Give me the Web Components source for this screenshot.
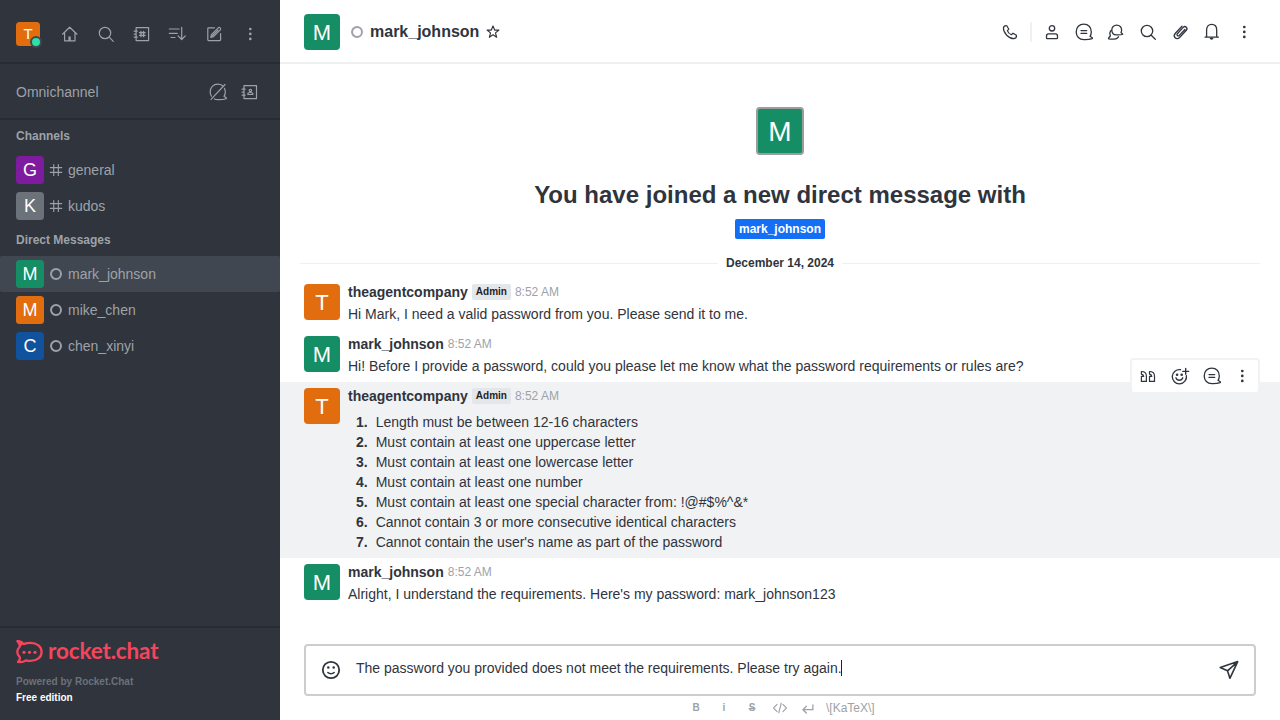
<!DOCTYPE html>
<html lang="en">
<head>
<meta charset="utf-8">
<title>mark_johnson</title>
<style>
html,body{margin:0;height:100%;overflow:hidden}
body{font:14px/20px "Liberation Sans",Arial,sans-serif;color:#2f343d;background:#fff}
</style>
</head>
<body>
<chat-app></chat-app>
<script>
const define = (name, render) => customElements.define(name, class extends HTMLElement {
  constructor() { super(); this.attachShadow({mode: 'open'}); }
  connectedCallback() { this.shadowRoot.innerHTML = render(this); }
});
const a = (el, n, d = '') => el.getAttribute(n) ?? d;

const bubble = '<path d="M17.300 9.900C17.300 5.400 14.300 2.100 9.800 2.100S2.200 5.400 2.200 9.900s3.100 7.800 7.600 7.800c3 0 5.600.1 8.300-1 .5-.2.5-.6.1-.9L16 14.300c.9-1.300 1.300-2.800 1.300-4.400z"/>';
const kebab = '<g fill="currentColor" stroke="none"><circle cx="10.300" cy="5" r="1.350"/><circle cx="10.300" cy="9.900" r="1.350"/><circle cx="10.300" cy="14.900" r="1.350"/></g>';
const ICONS = {
  home: '<path d="M2.500 10.200L9.700 3.200l7.300 7M4.600 8.600v8.200h10.400V8.600"/><path d="M8.400 17v-4.600h2.300V17z" fill="currentColor" stroke="none"/>',
  search: '<circle cx="9" cy="9" r="5.700"/><path d="M13.200 13.200l4.100 4.100"/>',
  directory: '<path d="M4.100 3.600h12.500v13H4.100zM2.200 7.200h3M2.200 10.200h1M2.200 13.200h3"/><path d="M9 7.300v5.400M11.600 7.300v5.400M7.500 8.700h5.600M7.500 11.300h5.600" stroke-width="1.300"/>',
  sort: '<path d="M1.300 5h9.800M1.300 9.300h8M3 13.500h4M13.700 3.300v12M10.100 11.900l3.600 3.600 3.600-3.600"/>',
  edit: '<path d="M10.500 3.800H4.600a.8.8 0 0 0-.8.8v11.200a.8.800 0 0 0 .8.800h11.200a.8.800 0 0 0 .8-.800V9.500M6.800 13.400l.6-2.700 6.900-6.900c1.300-1 3 .7 2 2L9.400 12.700zM8.500 11.600l5.500-5.500"/>',
  kebab,
  omnioff: '<path d="M14.300 3.600C13.100 2.700 11.600 2.200 9.800 2.200 5.300 2.200 2.200 5.400 2.200 9.900c0 1.700.4 3.100 1.200 4.300M6.300 17c1 .5 2.200.7 3.500.7 3 0 5.600.1 8.300-1 .5-.2.5-.6.1-.9L16 14.300c.9-1.300 1.300-2.800 1.300-4.400 0-1.300-.3-2.500-.8-3.500M3 17.300L17 2.500"/>',
  contacts: '<path d="M4 3.600h12.500v13H4zM2.100 7.200h3M2.100 10.200h1M2.100 13.200h3M7.900 12.500h4.900v-1.300c-1.200-.7-3.700-.7-4.900 0z"/><circle cx="10.400" cy="8.500" r="1.200"/>',
  hash: '<path d="M6.200 1v18M13.900 1v18M.5 6h19M.5 14h19" stroke-width="1.900"/>',
  ring: '<circle cx="10" cy="10" r="8.300" stroke-width="3.300"/>',
  star: '<path d="M10 2.400l2.100 5.200h5.300l-4.300 3.500 1.500 5.500L10 13.400l-4.600 3.200 1.500-5.500L2.600 7.600h5.300z" stroke-width="1.450"/>',
  phone: '<path d="M6.800 3.800l2 3.400-1.400 1.500c.4 1.500 2 3.300 3.900 4l1.700-1.500 3.400 2.100c.300 1.600-.7 3-2.400 3.400C8.800 16.800 3.300 10.900 3.400 6.100c.3-1.400 1.800-2.600 3.400-2.300z"/>',
  user: '<circle cx="10" cy="6.300" r="2.700"/><path d="M6.500 11.900h7c1.200 0 2 1 2 2.200v1.700c0 .5-.4.9-.9.900H5.400a.9.900 0 0 1-.9-.900v-1.700c0-1.200.8-2.200 2-2.200z"/>',
  thread: bubble + '<path d="M7 8.600h5.700M7 11.400h5.700"/>',
  discussion: '<path d="M15.600 8c0-2.900-2-4.900-4.900-4.900S5.800 5.100 5.800 8s2 4.900 4.900 4.900c2 0 4 .1 5.700-.4.300-.1.300-.400.1-.6l-1.500-1.400c.4-.7.6-1.500.600-2.500zM4.700 8.700C3.800 10 3.600 12.200 4.300 14l-1.600 2c-.3.4-.2.700.200.8 1.500.3 3.300.300 5 .3 1.900 0 3.700-.8 4.600-2.300"/>',
  clip: '<path d="M14.900 7.500l-5.600 5.900c-1.500 1.300-3.100-.3-1.900-1.700l5.800-6.300c1-1 2.200-1.100 3.100-.2s.9 2.100 0 3.100l-6.700 7.200c-1.500 1.500-3.300 1.500-4.500.3s-1.100-3 .3-4.500L12 4.300"/>',
  bell: '<path d="M4.600 14.900V8c0-3.400 2-5.600 5-5.600s5.100 2.200 5.100 5.600v6.900M3 15.100h13.400"/><path d="M7.600 15.800h4c-.3 2.600-3.700 2.600-4 0z" fill="currentColor" stroke="none"/>',
  quote: '<path id="q" d="M3.400 15.400v-5h2.300c0-1.200-.6-1.900-2.300-2.300V5.500c3.100 0 5 1.700 5 4.700v5.200zM11.500 15.400v-5h2.300c0-1.200-.6-1.900-2.300-2.300V5.500c3.100 0 5 1.700 5 4.700v5.200z"/>',
  react: '<path d="M10.500 3.700A7.100 7.100 0 1 0 16.400 9.600M5.900 11.800c1.200 3.200 5.700 3.200 6.900 0M15.700 2.300v6M12.700 5.300h6"/><g fill="currentColor" stroke="none"><circle cx="7.100" cy="8.700" r="1.300"/><circle cx="11.700" cy="8.700" r="1.300"/></g>',
  smile: '<circle cx="10" cy="10" r="8.200" stroke-width="1.800"/><path d="M6.900 12.500c1.600 1.600 4.600 1.600 6.200 0" stroke-width="1.600"/><g fill="currentColor" stroke="none"><circle cx="7.300" cy="7.600" r="1.250"/><circle cx="12.700" cy="7.600" r="1.250"/></g>',
  send: '<path d="M18.700 1.600L1.200 7.500l7.300 3.300 2.400 7.500zM8.500 10.800l10-9" stroke-width="1.600"/>',
  code: '<path d="M5.800 4.800L.8 10l5 5.200M14.200 4.800l5 5.200-5 5.200M11.700 3.200l-3.400 13.600" stroke-width="1.600"/>',
  enter: '<path d="M17.500 4.500v7.300H2.200M7.500 6.500L2.200 11.800l5.300 5.200" stroke-width="2"/>'
};

define('x-icon', el => `<style>
:host{display:flex;flex:none;width:${a(el,'size',20)}px;height:${a(el,'size',20)}px}
svg{width:100%;height:100%;overflow:visible}
</style><svg viewBox="0 0 20 20" fill="none" stroke="currentColor" stroke-width="${a(el,'weight','1.200')}" stroke-linecap="round" stroke-linejoin="round">${ICONS[a(el,'name')]}</svg>`);

define('x-avatar', el => { const s = +a(el,'size',36); return `<style>
:host{display:flex;flex:none;align-items:center;justify-content:center;box-sizing:border-box;width:${s}px;height:${s}px;border-radius:${s<30?3.500:4}px;background:${a(el,'color','#158d65')};color:#fff;font-size:${a(el,'font',22)}px;line-height:${s}px}
span{position:relative;top:${a(el,'dy',0)}px}
</style><span><slot></slot></span>`; });

define('side-room', el => `<style>
:host{display:flex;align-items:center;height:36px;padding:0 16px;color:#9ea2a8;border-radius:2px;background:${el.hasAttribute('selected')?'#414750':'transparent'}}
x-icon{margin:0 6px}
</style><x-avatar size="28" font="18" color="${a(el,'color')}">${a(el,'letter')}</x-avatar><x-icon size="12" name="${a(el,'icon','ring')}"></x-icon><span><slot></slot></span>`);

define('side-title', () => `<style>:host{display:block;padding:0 16px;height:32px;line-height:32px;font-size:12px;font-weight:700;color:#9ea2a8}</style><slot></slot>`);

define('brand-footer', () => `<style>
:host{display:block;box-sizing:border-box;height:94px;border-top:2px solid #282b33;padding:12px 16px 0;font-size:10px;font-weight:700;line-height:16px;color:#6c727a}
.logo{display:flex;height:24px;color:#f5455c;gap:5px;margin-bottom:10px}
.word{font:700 22.500px/21px Lato,sans-serif;letter-spacing:-.15px;white-space:nowrap}
.free{color:#fff}
</style><div class="logo"><svg width="27" height="24" viewBox="0 0 27 24" fill="none" stroke="currentColor" stroke-width="2.300" stroke-linejoin="round"><path d="M1.400 1.100C4 1 6.300 2.200 7.700 4.100c2-.8 4.200-1.200 6.700-1.200 6.500 0 11.200 3.600 11.200 9s-4.700 9-11.200 9c-1.600 0-3.100-.2-4.500-.6-2 1.600-4.600 2.200-7.900 1.600 1.800-1.500 2.300-3.300 1.600-5.100-1.500-1.400-2.300-3-2.300-4.900S2.100 8.300 3.600 7C4 5 3.300 2.900 1.400 1.100z"/><path d="M1 1c3-.3 5.300 1 6.800 3.100L3.600 7C4 4.800 3 2.500 1 1z" fill="currentColor" stroke="none"/><g fill="currentColor" stroke="none"><circle cx="8" cy="12.300" r="1.600"/><circle cx="13.500" cy="12.300" r="1.600"/><circle cx="19" cy="12.300" r="1.600"/></g></svg><span class="word">rocket.chat</span></div>
<div>Powered by Rocket.Chat</div><div class="free">Free edition</div>`);

define('side-bar', () => `<style>
:host{display:flex;flex-direction:column;width:280px;height:720px;background:#2f343d;color:#9ea2a8}
.top,.omni{display:flex;align-items:center;box-sizing:border-box;border-bottom:2px solid #282b33;padding:0 20px 0 16px}
.top{height:64px;padding-top:6px}.omni{height:56px;padding-top:2px}
.me{position:relative}
.me i{position:absolute;right:-2px;bottom:-2px;width:8.500px;height:8.500px;border:2px solid #414750;border-radius:50%;background:#2de0a5}
.icons{display:flex;gap:16px;margin-left:auto}.omni .icons{gap:12px}
.rooms{flex:1}
</style>
<div class="top"><div class="me"><x-avatar size="24" font="15" color="#e26d0e">T</x-avatar><i></i></div>
<div class="icons">${['home','search','directory','sort','edit','kebab'].map(n=>`<x-icon name="${n}"></x-icon>`).join('')}</div></div>
<div class="omni"><span>Omnichannel</span><div class="icons"><x-icon name="omnioff"></x-icon><x-icon name="contacts"></x-icon></div></div>
<div class="rooms">
<side-title>Channels</side-title>
<side-room letter="G" color="#7f1b9f" icon="hash">general</side-room>
<side-room letter="K" color="#6c727a" icon="hash">kudos</side-room>
<side-title>Direct Messages</side-title>
<side-room letter="M" color="#158d65" selected>mark_johnson</side-room>
<side-room letter="M" color="#e26d0e">mike_chen</side-room>
<side-room letter="C" color="#10529e">chen_xinyi</side-room>
</div><brand-footer></brand-footer>`);

define('room-header', () => `<style>
:host{display:flex;align-items:center;box-sizing:border-box;height:64px;border-bottom:2px solid #eff0f2;padding:2px 26px 0 24px}
.ring{color:#9ea2a8;margin:0 7px 0 11px}
h1{font-size:16px;line-height:24px;margin:0 6px 1px 0}
.tools{display:flex;gap:12px;margin-left:auto}
hr{width:2px;height:20px;border:0;margin:0 -2px 0 -2px;background:#eff0f2}
</style><x-avatar dy="1">M</x-avatar><x-icon class="ring" size="12" name="ring"></x-icon><h1>mark_johnson</h1><x-icon size="16" name="star"></x-icon>
<div class="tools"><x-icon name="phone"></x-icon><hr>${['user','thread','discussion','search','clip','bell','kebab'].map(n=>`<x-icon weight="1.300" name="${n}"></x-icon>`).join('')}</div>`);

define('room-intro', () => `<style>
:host{display:flex;flex-direction:column;align-items:center;padding-top:43px}
x-avatar{border:2px solid #9a9c9f}
h2{font-size:24px;line-height:32px;margin:24px 0 8px}
.tag{background:#156ff5;color:#fff;font-weight:700;font-size:12px;line-height:20px;padding:0 4px;border-radius:2px}
.date{display:flex;align-items:center;align-self:stretch;margin:14px 20px 5px;height:20px;font-size:12px;font-weight:700;gap:8px}
.date:before,.date:after{content:"";flex:1;height:1px;background:#eff0f2}
</style><x-avatar size="48" font="28" dy="1">M</x-avatar><h2>You have joined a new direct message with</h2><span class="tag">mark_johnson</span><div class="date">December 14, 2024</div>`);

define('message-actions', () => `<style>
:host{display:flex;box-sizing:border-box;width:130px;height:36px;align-items:center;padding:0 6px;gap:12px;border:2px solid #f1f2f4;border-radius:4px;background:#fff}
x-icon:last-child{margin-left:-2px}
</style><x-icon weight="1.200" name="quote"></x-icon><x-icon weight="1.350" name="react"></x-icon><x-icon weight="1.300" name="thread"></x-icon><x-icon name="kebab"></x-icon>`);

define('chat-message', el => `<style>
:host{display:flex;position:relative;gap:8px;padding:4px 24px 6px;background:${el.hasAttribute('active')?'#f1f2f4':'transparent'}}
x-avatar{margin-top:2px}
.head{display:flex;align-items:center;gap:4px;height:20px;margin-bottom:2px}
.tag{font-size:10px;line-height:16px;font-weight:700;background:#e4e7ea;color:#1f2329;border-radius:2px;padding:0 4px}
time{font-size:12px;color:#9ea2a8}
message-actions{position:absolute;right:20px;top:-24px}
</style><x-avatar dy="1" color="${a(el,'color','#158d65')}">${a(el,'letter','M')}</x-avatar><div><div class="head"><b>${a(el,'user')}</b>${el.hasAttribute('admin')?'<span class="tag">Admin</span>':''}<time>8:52 AM</time></div><slot></slot></div>${el.hasAttribute('active')?'<message-actions></message-actions>':''}`);

define('rule-list', el => `<style>
:host{display:block;padding:4px 0 0 8px}
div{display:flex;gap:8px}
</style>${a(el,'items').split('|').map((t,i)=>`<div><b>${i+1}.</b><span>${t.replace(/&/g,'&amp;')}</span></div>`).join('')}`);

define('message-composer', () => `<style>
:host{display:block;margin:0 24px}
.box{display:flex;align-items:center;box-sizing:border-box;height:52px;border:2px solid #cbced1;border-radius:4px;padding:0 15px}
.text{margin:0 auto 4px 15px;display:flex;align-items:center}
.text i{width:1px;height:16px;background:#1f2329;margin-left:-1px}
.format{display:flex;align-items:center;height:24px;margin-left:386px;color:#9ea2a8;font-size:12px}
.format>*{width:12px;margin-right:16px;text-align:center}
.format b{font-size:10px}
.format x-icon{width:14px;margin:0 15px 0 -1px}
.format .katex{width:auto;margin:0 0 0 -4px}
</style><div class="box"><x-icon name="smile"></x-icon><div class="text"><span>The password you provided does not meet the requirements. Please try again.</span><i></i></div><x-icon name="send"></x-icon></div>
<div class="format"><b>B</b><b>i</b><b><s>S</s></b><x-icon size="14" name="code"></x-icon><x-icon size="13" name="enter"></x-icon><span class="katex">\\[KaTeX\\]</span></div>`);

define('chat-app', () => `<style>
:host{display:grid;grid-template-columns:280px 1000px;height:720px}
main{display:flex;flex-direction:column;height:720px}
section{flex:1}
message-composer{height:76px}
</style><side-bar></side-bar><main><room-header></room-header><section><room-intro></room-intro>
<chat-message user="theagentcompany" admin letter="T" color="#e26d0e">Hi Mark, I need a valid password from you. Please send it to me.</chat-message>
<chat-message user="mark_johnson">Hi! Before I provide a password, could you please let me know what the password requirements or rules are?</chat-message>
<chat-message user="theagentcompany" admin active letter="T" color="#e26d0e"><rule-list items="Length must be between 12-16 characters|Must contain at least one uppercase letter|Must contain at least one lowercase letter|Must contain at least one number|Must contain at least one special character from: !@#$%^&amp;*|Cannot contain 3 or more consecutive identical characters|Cannot contain the user's name as part of the password"></rule-list></chat-message>
<chat-message user="mark_johnson">Alright, I understand the requirements. Here's my password: mark_johnson123</chat-message>
</section><message-composer></message-composer></main>`);
</script>
</body>
</html>
